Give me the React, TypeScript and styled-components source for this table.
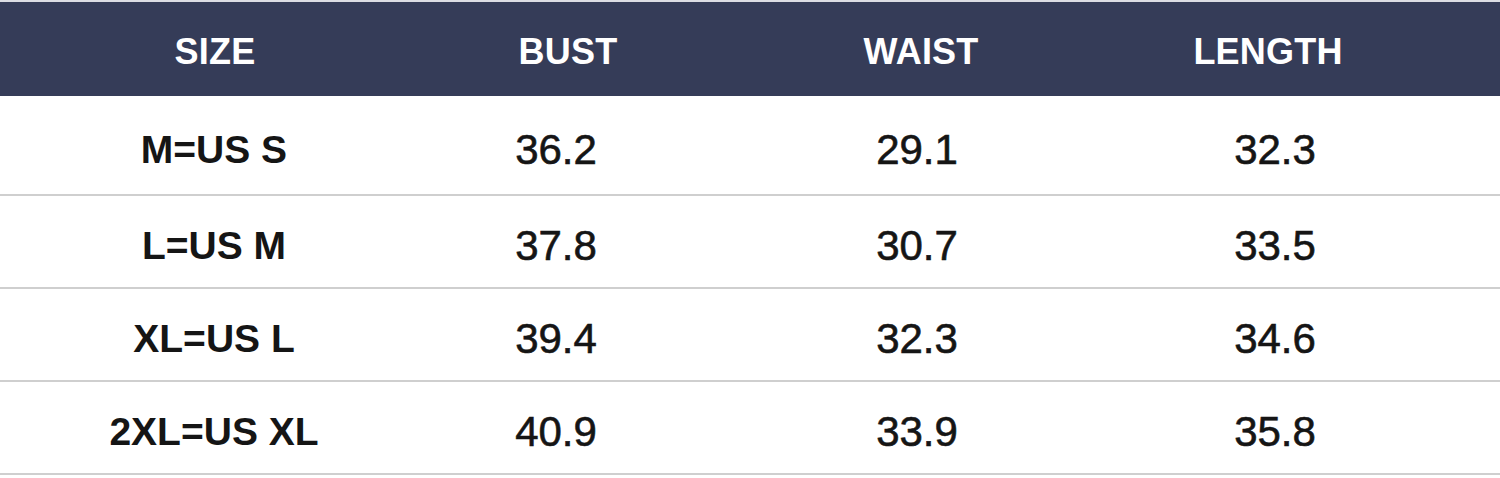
import React from 'react';
import styled, { createGlobalStyle } from 'styled-components';

const GlobalStyle = createGlobalStyle`
  html, body {
    margin: 0;
    padding: 0;
    background: #ffffff;
  }
  body {
    font-family: "Liberation Sans", Arial, sans-serif;
  }
`;

const Page = styled.div`
  width: 1500px;
  height: 478px;
  background-color: #fff;
  border-top: 2px solid #dcdde3;
  box-sizing: border-box;
  overflow: hidden;
`;

const HeaderRow = styled.div`
  display: grid;
  grid-template-columns: 430px 276px 430px 264px;
  align-items: center;
  height: 94px;
  padding-top: 5px;
  box-sizing: border-box;
  background-color: #353c58;
`;

const HeaderCell = styled.div`
  text-align: center;
  color: #ffffff;
  font-size: 36px;
  font-weight: 700;
  letter-spacing: 0.2px;
`;

const BodyRow = styled.div<{ $height: number }>`
  display: grid;
  grid-template-columns: 428px 256px 466px 250px;
  align-items: center;
  height: ${(p) => p.$height}px;
  padding-top: ${(p) => (p.$height > 95 ? 10 : 8)}px;
  box-sizing: border-box;
  border-bottom: 2px solid #cfcfcf;
`;

const SizeCell = styled.div`
  text-align: center;
  color: #151515;
  font-size: 39px;
  font-weight: 700;
`;

const ValueCell = styled.div`
  text-align: center;
  color: #151515;
  font-size: 42px;
  font-weight: 400;
  -webkit-text-stroke: 0.6px #151515;
`;

const headers = ['SIZE', 'BUST', 'WAIST', 'LENGTH'];

const rows = [
  { size: 'M=US S', bust: '36.2', waist: '29.1', length: '32.3' },
  { size: 'L=US M', bust: '37.8', waist: '30.7', length: '33.5' },
  { size: 'XL=US L', bust: '39.4', waist: '32.3', length: '34.6' },
  { size: '2XL=US XL', bust: '40.9', waist: '33.9', length: '35.8' },
];

const App: React.FC = () => {
  return (
    <>
      <GlobalStyle />
      <Page>
        <HeaderRow>
          {headers.map((h) => (
            <HeaderCell key={h}>{h}</HeaderCell>
          ))}
        </HeaderRow>
        {rows.map((r, i) => (
          <BodyRow key={r.size} $height={i === 0 ? 100 : 93}>
            <SizeCell>{r.size}</SizeCell>
            <ValueCell>{r.bust}</ValueCell>
            <ValueCell>{r.waist}</ValueCell>
            <ValueCell>{r.length}</ValueCell>
          </BodyRow>
        ))}
      </Page>
    </>
  );
};

export default App;
